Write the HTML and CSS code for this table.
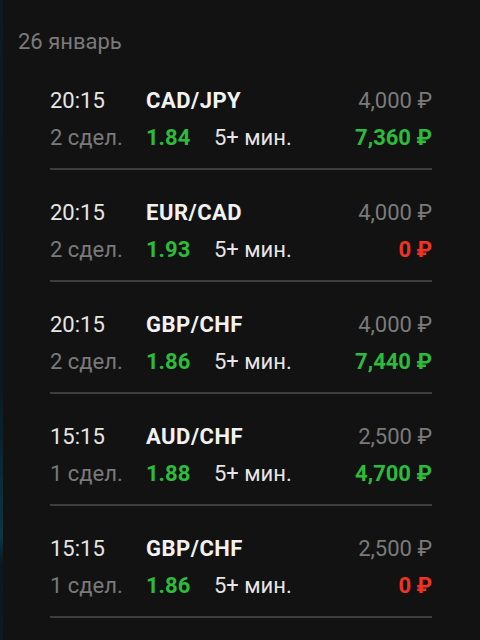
FILE: index.html
```html
<!DOCTYPE html>
<html lang="ru">
<head>
    <meta charset="UTF-8">
    <meta name="viewport" content="width=device-width, initial-scale=1.0">
    <title>История сделок</title>
    <link rel="stylesheet" href="styles.css">
</head>
<body>
    <div class="edge"></div>
    <div class="page">
        <div class="date">26 январь</div>
        <ul class="deals">
            <li class="deal">
                <div class="line">
                    <span class="time">20:15</span>
                    <span class="pair">CAD/JPY</span>
                    <span class="stake">4,000 ₽</span>
                </div>
                <div class="line">
                    <span class="count">2 сдел.</span>
                    <span class="odds">1.84</span>
                    <span class="dur">5+ мин.</span>
                    <span class="result win">7,360 ₽</span>
                </div>
            </li>
            <li class="deal">
                <div class="line">
                    <span class="time">20:15</span>
                    <span class="pair">EUR/CAD</span>
                    <span class="stake">4,000 ₽</span>
                </div>
                <div class="line">
                    <span class="count">2 сдел.</span>
                    <span class="odds">1.93</span>
                    <span class="dur">5+ мин.</span>
                    <span class="result loss">0 ₽</span>
                </div>
            </li>
            <li class="deal">
                <div class="line">
                    <span class="time">20:15</span>
                    <span class="pair">GBP/CHF</span>
                    <span class="stake">4,000 ₽</span>
                </div>
                <div class="line">
                    <span class="count">2 сдел.</span>
                    <span class="odds">1.86</span>
                    <span class="dur">5+ мин.</span>
                    <span class="result win">7,440 ₽</span>
                </div>
            </li>
            <li class="deal">
                <div class="line">
                    <span class="time">15:15</span>
                    <span class="pair">AUD/CHF</span>
                    <span class="stake">2,500 ₽</span>
                </div>
                <div class="line">
                    <span class="count">1 сдел.</span>
                    <span class="odds">1.88</span>
                    <span class="dur">5+ мин.</span>
                    <span class="result win">4,700 ₽</span>
                </div>
            </li>
            <li class="deal">
                <div class="line">
                    <span class="time">15:15</span>
                    <span class="pair">GBP/CHF</span>
                    <span class="stake">2,500 ₽</span>
                </div>
                <div class="line">
                    <span class="count">1 сдел.</span>
                    <span class="odds">1.86</span>
                    <span class="dur">5+ мин.</span>
                    <span class="result loss">0 ₽</span>
                </div>
            </li>
        </ul>
    </div>
</body>
</html>
```

FILE: styles.css
```css
body {
    margin: 0;
    background-color: #121212;
    font-family: Roboto, "Noto Sans", sans-serif;
    color: #e6e6e6;
    display: flex;
    height: 640px;
    overflow: hidden;
}
.edge {
    width: 3px;
    background: linear-gradient(#0c1a22, #0a1820 60%, #0d3548 84%, #0a1820 88%, #0c1a22);
}
.page {
    flex: 1;
    padding-top: 28px;
}
.date {
    padding-left: 15px;
    font-size: 22px;
    line-height: 28px;
    color: #7a7a7a;
}
.deals {
    list-style: none;
    margin: 2px 0 0 47px;
    padding: 0;
    width: 382px;
}
.deal {
    padding: 24px 0 12px;
    border-bottom: 2px solid #3e3e3e;
}
.line {
    display: flex;
    align-items: center;
    height: 37px;
    font-size: 22px;
}
.time, .count {
    width: 96px;
}
.count {
    color: #7a7a7a;
}
.pair {
    font-weight: 700;
    color: #f2f2f2;
    letter-spacing: 0.5px;
}
.odds {
    width: 68px;
    font-weight: 700;
    color: #2dbb3c;
}
.dur {
    color: #e6e6e6;
}
.stake, .result {
    margin-left: auto;
}
.stake {
    color: #7a7a7a;
}
.result {
    font-weight: 700;
}
.win {
    color: #2dbb3c;
}
.loss {
    color: #ee3524;
}
```
